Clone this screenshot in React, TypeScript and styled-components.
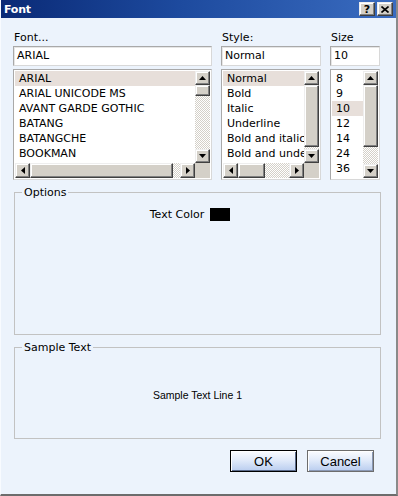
import React from "react"
import styled, { createGlobalStyle } from "styled-components"

const fonts = ["ARIAL", "ARIAL UNICODE MS", "AVANT GARDE GOTHIC", "BATANG", "BATANGCHE", "BOOKMAN"]
const styles = ["Normal", "Bold", "Italic", "Underline", "Bold and italic", "Bold and underline"]
const sizes = ["8", "9", "10", "12", "14", "24", "36"]

type Dir = "up" | "down" | "left" | "right"

const Arrow: React.FC<{ dir: Dir }> = ({ dir }) => {
  const pts: Record<Dir, string> = {
    up: "3.5,0 7,4 0,4",
    down: "0,0 7,0 3.5,4",
    left: "4,0 4,7 0,3.5",
    right: "0,0 4,3.5 0,7",
  }
  const vertical = dir === "up" || dir === "down"
  return (
    <svg width={vertical ? 7 : 4} height={vertical ? 4 : 7} viewBox={vertical ? "0 0 7 4" : "0 0 4 7"}>
      <polygon points={pts[dir]} fill="#000" />
    </svg>
  )
}

const VScroll: React.FC<{ thumb: number }> = ({ thumb }) => (
  <S.VBar>
    <S.ScrollBtn $w={15} $h={14}>
      <Arrow dir="up" />
    </S.ScrollBtn>
    <S.Thumb style={{ flex: `0 0 ${thumb}px` }} />
    <S.Track />
    <S.ScrollBtn $w={15} $h={14}>
      <Arrow dir="down" />
    </S.ScrollBtn>
  </S.VBar>
)

const HScroll: React.FC<{ thumb: number }> = ({ thumb }) => (
  <S.HBar>
    <S.ScrollBtn $w={15} $h={15}>
      <Arrow dir="left" />
    </S.ScrollBtn>
    <S.Thumb style={{ flex: `0 0 ${thumb}px` }} />
    <S.Track />
    <S.ScrollBtn $w={15} $h={15}>
      <Arrow dir="right" />
    </S.ScrollBtn>
  </S.HBar>
)

const ListBox: React.FC<{
  items: string[]
  selected: string
  vThumb: number
  hThumb?: number
}> = ({ items, selected, vThumb, hThumb }) => (
  <S.ListBox $hasH={hThumb !== undefined}>
    <S.Items>
      {items.map((item) => (
        <S.Item key={item} $selected={item === selected}>
          {item}
        </S.Item>
      ))}
    </S.Items>
    <VScroll thumb={vThumb} />
    {hThumb !== undefined && (
      <>
        <HScroll thumb={hThumb} />
        <S.Corner />
      </>
    )}
  </S.ListBox>
)

export default function App() {
  return (
    <>
      <GlobalStyle />
      <S.Window>
        <S.TitleBar>
          <S.Title>Font</S.Title>
          <S.TitleButtons>
            <S.TitleBtn>?</S.TitleBtn>
            <S.TitleBtn>
              <svg width="8" height="7" viewBox="0 0 8 7">
                <path d="M0.5 0.5 L7.5 6.5 M7.5 0.5 L0.5 6.5" stroke="#000" strokeWidth="1.6" />
              </svg>
            </S.TitleBtn>
          </S.TitleButtons>
        </S.TitleBar>
        <S.Body>
          <S.Pickers>
            <S.Column>
              <S.Label>Font...</S.Label>
              <S.TextInput>ARIAL</S.TextInput>
              <ListBox items={fonts} selected="ARIAL" vThumb={11} hThumb={143} />
            </S.Column>
            <S.Column>
              <S.Label>Style:</S.Label>
              <S.TextInput>Normal</S.TextInput>
              <ListBox items={styles} selected="Normal" vThumb={62} hThumb={27} />
            </S.Column>
            <S.Column>
              <S.Label>Size</S.Label>
              <S.TextInput>10</S.TextInput>
              <ListBox items={sizes} selected="10" vThumb={62} />
            </S.Column>
          </S.Pickers>

          <S.Group $height={149}>
            <S.Legend>Options</S.Legend>
            <S.ColorRow>
              Text Color
              <S.Swatch $color="#000" />
            </S.ColorRow>
          </S.Group>

          <S.Group $height={98}>
            <S.Legend>Sample Text</S.Legend>
            <S.Sample>Sample Text Line 1</S.Sample>
          </S.Group>

          <S.ButtonRow>
            <S.Button $default>OK</S.Button>
            <S.Button>Cancel</S.Button>
          </S.ButtonRow>
        </S.Body>
      </S.Window>
    </>
  )
}

const GlobalStyle = createGlobalStyle`
  html, body {
    margin: 0;
    padding: 0;
    background: #ecf3fc;
  }
  body {
    font-family: "DejaVu Sans", Verdana, sans-serif;
    font-size: 11px;
    color: #000;
  }
`

const bevel = `
  background: #d4d0c8;
  border: 1px solid;
  border-color: #eeeeee #404040 #404040 #eeeeee;
  box-shadow: inset -1px -1px 0 #808080, inset 1px 1px 0 #ffffff;
  box-sizing: border-box;
`

const S = {
  Window: styled.div`
    width: 398px;
    height: 496px;
    box-sizing: border-box;
    display: flex;
    flex-direction: column;
    background: #ecf3fc;
    border-left: 1px solid #f8fbff;
    border-right: 2px solid #8a8a8a;
    border-bottom: 2px solid #6c6c6c;
  `,
  TitleBar: styled.div`
    height: 18px;
    flex: none;
    display: flex;
    align-items: center;
    justify-content: space-between;
    padding: 0 3px 0 3px;
    background: linear-gradient(to right, #0a2a76 0%, #1d4a9e 45%, #3a6cc0 100%);
  `,
  Title: styled.span`
    color: #fff;
    font-weight: bold;
    font-size: 11px;
    letter-spacing: -0.2px;
  `,
  TitleButtons: styled.div`
    display: flex;
    gap: 2px;
  `,
  TitleBtn: styled.div`
    ${bevel}
    width: 16px;
    height: 14px;
    display: flex;
    align-items: center;
    justify-content: center;
    font-weight: bold;
    font-size: 11px;
    line-height: 1;
  `,
  Body: styled.div`
    flex: 1;
    display: flex;
    flex-direction: column;
    padding: 13px 17px 0 12px;
  `,
  Pickers: styled.div`
    display: grid;
    grid-template-columns: 199px 100px 50px;
    column-gap: 9px;
  `,
  Column: styled.div`
    display: flex;
    flex-direction: column;
  `,
  Label: styled.div`
    height: 14px;
    line-height: 14px;
    padding-left: 1px;
    margin-bottom: 1px;
  `,
  TextInput: styled.div`
    height: 20px;
    box-sizing: border-box;
    border: 1px solid;
    border-color: #a9a9a9 #d8d8d8 #d8d8d8 #a9a9a9;
    box-shadow: inset 1px 1px 0 #e6e6e6;
    background: #fff;
    padding-left: 3px;
    line-height: 18px;
    margin-bottom: 3px;
  `,
  ListBox: styled.div<{ $hasH: boolean }>`
    height: 111px;
    box-sizing: border-box;
    border: 1px solid;
    border-color: #a9a9a9 #d8d8d8 #d8d8d8 #a9a9a9;
    background: #fff;
    padding: 1px;
    display: grid;
    grid-template-columns: 1fr 15px;
    grid-template-rows: ${(p) => (p.$hasH ? "1fr 15px" : "1fr")};
    overflow: hidden;
  `,
  Items: styled.div`
    overflow: hidden;
    white-space: nowrap;
    min-width: 0;
  `,
  Item: styled.div<{ $selected: boolean }>`
    height: 15px;
    line-height: 15px;
    padding-left: 4px;
    background: ${(p) => (p.$selected ? "#e7dfda" : "transparent")};
  `,
  VBar: styled.div`
    display: flex;
    flex-direction: column;
    min-height: 0;
  `,
  HBar: styled.div`
    display: flex;
    min-width: 0;
  `,
  ScrollBtn: styled.div<{ $w: number; $h: number }>`
    ${bevel}
    flex: 0 0 auto;
    width: ${(p) => p.$w}px;
    height: ${(p) => p.$h}px;
    display: flex;
    align-items: center;
    justify-content: center;
  `,
  Thumb: styled.div`
    ${bevel}
  `,
  Track: styled.div`
    flex: 1;
    background: repeating-conic-gradient(#d4d0c8 0 25%, #ffffff 0 50%) 0 0 / 2px 2px;
  `,
  Corner: styled.div`
    background: #d4d0c8;
  `,
  Group: styled.fieldset<{ $height: number }>`
    margin: 6px 0 0 1px;
    padding: 0;
    width: 367px;
    box-sizing: border-box;
    height: ${(p) => p.$height}px;
    border: 1px solid #c2c2c2;
  `,
  Legend: styled.legend`
    margin-left: 7px;
    padding: 0 2px;
    line-height: 13px;
  `,
  ColorRow: styled.div`
    display: flex;
    align-items: center;
    justify-content: center;
    gap: 6px;
    padding-right: 15px;
    margin-top: 9px;
  `,
  Swatch: styled.div<{ $color: string }>`
    width: 20px;
    height: 13px;
    background: ${(p) => p.$color};
  `,
  Sample: styled.div`
    height: 82px;
    display: flex;
    align-items: center;
    justify-content: center;
    font-family: "Liberation Sans", Arial, sans-serif;
    font-size: 10.5px;
  `,
  ButtonRow: styled.div`
    display: flex;
    justify-content: flex-end;
    gap: 10px;
    margin-top: 11px;
    padding-right: 5px;
  `,
  Button: styled.div<{ $default?: boolean }>`
    width: 67px;
    height: 22px;
    box-sizing: border-box;
    display: flex;
    align-items: center;
    justify-content: center;
    font-family: "Liberation Sans", Arial, sans-serif;
    font-size: 13px;
    background: linear-gradient(to bottom, #fbfcff 0%, #e2ebfa 45%, #b9cdef 100%);
    border: 1px solid ${(p) => (p.$default ? "#000" : "#6d6d6d")};
    box-shadow: ${(p) =>
      p.$default
        ? "inset 1px 1px 0 #fff, inset -1px -1px 0 #5a6a8a"
        : "inset 1px 1px 0 #fff, inset -1px -1px 0 #8a98b4"};
  `,
}
